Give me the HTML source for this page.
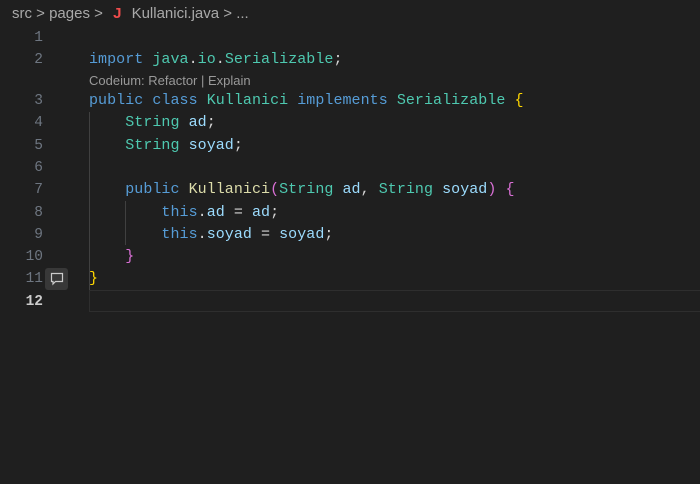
<!DOCTYPE html>
<html><head><style>
body{margin:0;width:700px;height:484px;background:#1f1f1f;overflow:hidden;font-family:"Liberation Mono",monospace;position:relative}
.bc{position:absolute;left:12px;top:5px;font:15px "Liberation Sans",sans-serif;color:#a9a9a9;white-space:pre}
.bc .j{color:#f14c4c;font-weight:bold;margin:0 6px 0 6px}
.ln{position:absolute;left:0;width:43px;text-align:right;font-size:14.5px;color:#6e7681}
.code{position:absolute;left:89px;font-size:15px;letter-spacing:0.05px;color:#d4d4d4;white-space:pre}
.k{color:#569cd6}.t{color:#4ec9b0}.v{color:#9cdcfe}.f{color:#dcdcaa}.y{color:#ffd700}.p{color:#da70d6}
.lens{position:absolute;left:89px;top:73px;font:13px "Liberation Sans",sans-serif;color:#999}
.guide{position:absolute;width:1px;background:#404040}
</style></head><body>
<div class="bc">src &gt; pages &gt; <span class="j">J</span> Kullanici.java &gt; ...</div>
<div class="guide" style="left:89px;top:112px;height:178px"></div>
<div class="guide" style="left:125px;top:201px;height:44px"></div>
<div style="position:absolute;left:89px;top:290px;width:611px;height:20px;border:1px solid #2e2e2e;border-right:none"></div>
<div style="position:absolute;left:45px;top:268px;width:23px;height:22px;background:#383838;border-radius:3px"></div>
<svg style="position:absolute;left:50px;top:272px" width="14" height="14" viewBox="0 0 14 14"><path d="M1.5 1.5h11v8h-7l-2.5 2.5v-2.5h-1.5z" fill="none" stroke="#ccc" stroke-width="1.2"/></svg>
<div class="ln" style="top:30px">1</div>
<div class="ln" style="top:52px">2</div>
<div class="ln" style="top:93px">3</div>
<div class="ln" style="top:115px">4</div>
<div class="ln" style="top:138px">5</div>
<div class="ln" style="top:160px">6</div>
<div class="ln" style="top:182px">7</div>
<div class="ln" style="top:205px">8</div>
<div class="ln" style="top:227px">9</div>
<div class="ln" style="top:249px">10</div>
<div class="ln" style="top:271px">11</div>
<div class="ln" style="top:294px;color:#ccc;font-weight:bold">12</div>
<div class="code" style="top:51px"><span class="k">import</span> <span class="t">java</span>.<span class="t">io</span>.<span class="t">Serializable</span>;</div>
<div class="lens">Codeium: Refactor | Explain</div>
<div class="code" style="top:92px"><span class="k">public</span> <span class="k">class</span> <span class="t">Kullanici</span> <span class="k">implements</span> <span class="t">Serializable</span> <span class="y">{</span></div>
<div class="code" style="top:114px">    <span class="t">String</span> <span class="v">ad</span>;</div>
<div class="code" style="top:137px">    <span class="t">String</span> <span class="v">soyad</span>;</div>
<div class="code" style="top:181px">    <span class="k">public</span> <span class="f">Kullanici</span><span class="p">(</span><span class="t">String</span> <span class="v">ad</span>, <span class="t">String</span> <span class="v">soyad</span><span class="p">)</span> <span class="p">{</span></div>
<div class="code" style="top:204px">        <span class="k">this</span>.<span class="v">ad</span> = <span class="v">ad</span>;</div>
<div class="code" style="top:226px">        <span class="k">this</span>.<span class="v">soyad</span> = <span class="v">soyad</span>;</div>
<div class="code" style="top:248px">    <span class="p">}</span></div>
<div class="code" style="top:270px"><span class="y">}</span></div>
</body></html>
